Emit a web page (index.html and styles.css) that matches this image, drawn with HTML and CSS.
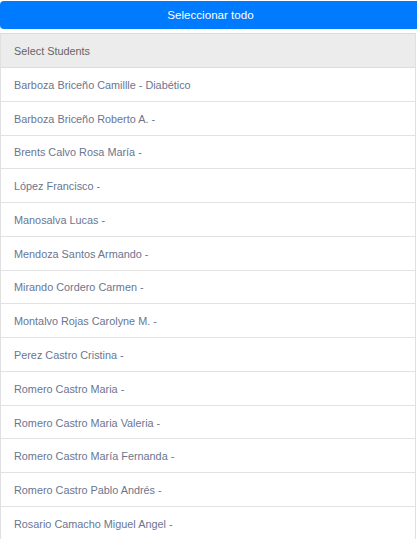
FILE: index.html
```html
<!DOCTYPE html>
<html>
<head>
<meta charset="utf-8">
<link rel="stylesheet" href="styles.css">
</head>
<body>
<div class="page">
  <button class="select-all">Seleccionar todo</button>
  <div class="list">
    <div class="list-header">Select Students</div>
    <div class="item">Barboza Briceño Camillle - Diabético</div>
    <div class="item">Barboza Briceño Roberto A. -</div>
    <div class="item">Brents Calvo Rosa María -</div>
    <div class="item">López Francisco -</div>
    <div class="item">Manosalva Lucas -</div>
    <div class="item">Mendoza Santos Armando -</div>
    <div class="item">Mirando Cordero Carmen -</div>
    <div class="item">Montalvo Rojas Carolyne M. -</div>
    <div class="item">Perez Castro Cristina -</div>
    <div class="item">Romero Castro Maria -</div>
    <div class="item">Romero Castro Maria Valeria -</div>
    <div class="item">Romero Castro María Fernanda -</div>
    <div class="item">Romero Castro Pablo Andrés -</div>
    <div class="item">Rosario Camacho Miguel Angel -</div>
  </div>
</div>
</body>
</html>
```

FILE: styles.css
```css
html, body {
  margin: 0;
  padding: 0;
  background: #fff;
  overflow: hidden;
}
body {
  font-family: "Liberation Sans", Arial, sans-serif;
}
.page {
  width: 417px;
  padding-top: 1px;
}
.select-all {
  display: block;
  width: 421px;
  height: 28px;
  margin: 0;
  padding: 0;
  border: none;
  border-radius: 4px 0 0 4px;
  background: #007bff;
  color: #fff;
  font-family: "Liberation Sans", Arial, sans-serif;
  font-size: 11.6px;
  line-height: 28px;
  text-align: center;
}
.list {
  margin-top: 4px;
  width: 416px;
  border-left: 1px solid #e0e0e0;
  border-right: 1px solid #e0e0e0;
  box-sizing: border-box;
}
.list-header {
  box-sizing: border-box;
  height: 35px;
  padding: 0 13px;
  display: flex;
  align-items: center;
  background: #ececec;
  border-top: 1px solid #dcdcdc;
  border-bottom: 1px solid #dcdcdc;
  color: #666;
  font-size: 10.85px;
}
.item {
  box-sizing: border-box;
  height: 33.77px;
  padding: 1px 13px 0;
  display: flex;
  align-items: center;
  border-bottom: 1px solid #e2e2e2;
  color: #6a7690;
  font-size: 10.85px;
}
```
